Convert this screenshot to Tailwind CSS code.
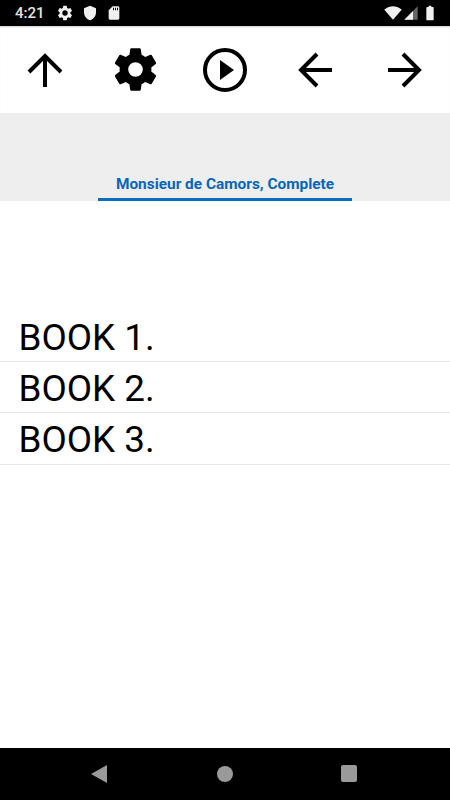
<!DOCTYPE html>
<html>
<head>
<meta charset="utf-8">
<script src="https://cdn.jsdelivr.net/npm/@tailwindcss/browser@4"></script>
</head>
<body class="bg-white font-['Roboto',sans-serif]">
<div class="w-[450px] h-[800px] flex flex-col overflow-hidden">
  <div class="h-[26px] bg-black flex items-center text-white shrink-0 relative">
    <span class="ml-[15px] w-[29px] text-[15px] font-medium text-[#e4e4e4] leading-none">4:21</span>
    <svg class="ml-[12px]" width="18" height="18" viewBox="0 0 24 24" fill="#f0f0f0"><path d="M19.14 12.94c.04-.3.06-.61.06-.94s-.02-.64-.07-.94l2.03-1.58a.49.49 0 0 0 .12-.61l-1.92-3.32a.49.49 0 0 0-.59-.22l-2.39.96a7 7 0 0 0-1.62-.94l-.36-2.54a.48.48 0 0 0-.48-.41h-3.84a.47.47 0 0 0-.47.41l-.36 2.54c-.59.24-1.13.57-1.62.94l-2.39-.96a.48.48 0 0 0-.59.22L2.74 8.87a.47.47 0 0 0 .12.61l2.03 1.58c-.05.3-.09.63-.09.94s.02.64.07.94l-2.03 1.58a.49.49 0 0 0-.12.61l1.92 3.32c.12.22.37.29.59.22l2.39-.96c.5.38 1.03.7 1.62.94l.36 2.54c.05.24.24.41.48.41h3.84c.24 0 .44-.17.47-.41l.36-2.54c.59-.24 1.13-.56 1.62-.94l2.39.96c.22.08.47 0 .59-.22l1.92-3.32a.46.46 0 0 0-.12-.61zM12 15.6A3.6 3.6 0 1 1 12 8.4a3.6 3.6 0 0 1 0 7.2z"/></svg>
    <svg class="ml-[8px]" width="16" height="16" viewBox="0 0 24 24" fill="#f0f0f0"><path d="M12 1 3 5v6c0 5.55 3.84 10.74 9 12 5.16-1.26 9-6.45 9-12V5z"/></svg>
    <svg class="ml-[8px]" width="16" height="16" viewBox="0 0 24 24" fill="#f0f0f0"><path d="M18 2h-8L4 8v12c0 1.1.9 2 2 2h12c1.1 0 2-.9 2-2V4c0-1.1-.9-2-2-2zm-6 6h-1.500V4H12zm3 0h-1.500V4H15zm3 0h-1.500V4H18z"/></svg>
    <div class="ml-auto flex items-center">
      <svg width="18" height="18" viewBox="0 0 24 24" fill="#f0f0f0"><path d="M12 21 .5 7.500C1 7 5.500 3 12 3s11 4 11.500 4.500z"/></svg>
      <svg class="ml-[1px]" width="16" height="16" viewBox="0 0 24 24"><path fill="#666" d="M22 2v20H2z"/><path fill="#f0f0f0" d="M15 9v13H2z"/></svg>
      <svg class="ml-[3px] mr-[12px]" width="16" height="16" viewBox="0 0 24 24" fill="#f0f0f0"><path d="M16 3h-2V1h-4v2H8c-.9 0-1.500.6-1.500 1.300v17.400c0 .7.6 1.300 1.500 1.300h8c.9 0 1.500-.6 1.500-1.300V4.300C17.500 3.600 16.900 3 16 3z"/></svg>
    </div>
  </div>
  <div class="h-[87px] shrink-0 grid grid-cols-5 items-center justify-items-center shadow-[inset_0_2px_2px_-1px_rgba(0,0,0,0.2)]">
    <svg class="w-[44px] h-[44px]" viewBox="0 0 44 44" fill="none" stroke="#000" stroke-width="4"><path d="M22 39V9M6 24 22 8l16 16"/></svg>
    <svg class="w-[53px] h-[53px]" viewBox="0 0 24 24" fill="#000"><path d="M19.14 12.94c.04-.3.06-.61.06-.94s-.02-.64-.07-.94l2.03-1.58a.49.49 0 0 0 .12-.61l-1.92-3.32a.49.49 0 0 0-.59-.22l-2.39.96a7 7 0 0 0-1.62-.94l-.36-2.54a.48.48 0 0 0-.48-.41h-3.84a.47.47 0 0 0-.47.41l-.36 2.54c-.59.24-1.13.57-1.62.94l-2.39-.96a.48.48 0 0 0-.59.22L2.74 8.870a.47.47 0 0 0 .12.61l2.03 1.58c-.05.3-.09.63-.09.94s.02.64.07.94l-2.03 1.58a.49.49 0 0 0-.12.61l1.92 3.32c.12.22.37.29.59.22l2.39-.96c.5.38 1.03.7 1.62.94l.36 2.54c.05.24.24.41.48.41h3.84c.24 0 .44-.17.47-.41l.36-2.54c.59-.24 1.13-.56 1.62-.94l2.39.96c.22.08.47 0 .59-.22l1.92-3.32a.46.46 0 0 0-.12-.61zM12 15.300A3.300 3.300 0 1 1 12 8.700a3.300 3.300 0 0 1 0 6.600z"/></svg>
    <svg class="w-[44px] h-[44px]" viewBox="0 0 44 44"><circle cx="22" cy="22" r="20" fill="none" stroke="#000" stroke-width="4"/><path d="M17 12 31 22 17 32z" fill="#000"/></svg>
    <svg class="w-[44px] h-[44px]" viewBox="0 0 44 44" fill="none" stroke="#000" stroke-width="4"><path d="M39 22H9M24 6 8 22l16 16"/></svg>
    <svg class="w-[44px] h-[44px]" viewBox="0 0 44 44" fill="none" stroke="#000" stroke-width="4"><path d="M5 22h30M20 6l16 16-16 16"/></svg>
  </div>
  <div class="h-[88px] shrink-0 bg-[#eeeeee] flex flex-col items-center justify-end">
    <div class="w-[254px] h-[30px] border-b-[3px] border-[#0a6ebd] flex items-center justify-center pt-[1px]">
      <span class="text-[15.4px] font-bold text-[#0a66b5] leading-none whitespace-nowrap">Monsieur de Camors, Complete</span>
    </div>
  </div>
  <div class="flex-1 pt-[110px]">
    <div class="h-[51px] border-b border-[#e8e8e8] pl-[18.500px] pt-[5px] flex items-center text-[36.800px] text-black leading-none">BOOK 1.</div>
    <div class="h-[51px] border-b border-[#e8e8e8] pl-[18.500px] pt-[5px] flex items-center text-[36.800px] text-black leading-none">BOOK 2.</div>
    <div class="h-[52px] border-b border-[#e8e8e8] pl-[18.500px] pt-[4px] flex items-center text-[36.800px] text-black leading-none">BOOK 3.</div>
  </div>
  <div class="h-[52px] shrink-0 bg-black relative flex items-center justify-center">
    <svg class="absolute left-[91px] top-[17px]" width="16" height="18" viewBox="0 0 16 18"><path d="M0 9 16 0v18z" fill="#9a9a9a"/></svg>
    <div class="w-4 h-4 rounded-full bg-[#9a9a9a]"></div>
    <div class="absolute left-[341px] top-[17px] w-4 h-[17px] rounded-[2px] bg-[#9a9a9a]"></div>
  </div>
</div>
</body>
</html>
